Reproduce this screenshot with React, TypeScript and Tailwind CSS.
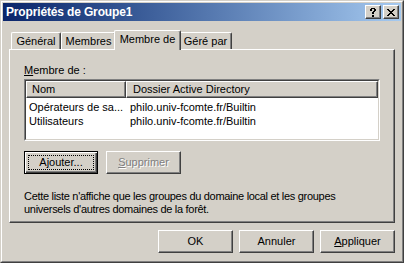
import React from "react";

function CloseGlyph() {
  return (
    <svg width="8" height="7" viewBox="0 0 8 7" shapeRendering="crispEdges">
      <path
        fill="#000"
        d="M0 0h2v1H0zM6 0h2v1H6zM1 1h2v1H1zM5 1h2v1H5zM2 2h4v1H2zM3 3h2v1H3zM2 4h4v1H2zM1 5h2v1H1zM5 5h2v1H5zM0 6h2v1H0zM6 6h2v1H6z"
      />
    </svg>
  );
}

function HelpGlyph() {
  return (
    <svg width="6" height="9" viewBox="0 0 6 9" shapeRendering="crispEdges">
      <path
        fill="#000"
        d="M1 0h4v1H1zM0 1h2v2H0zM4 1h2v2H4zM3 3h2v1H3zM2 4h2v2H2zM2 7h2v2H2z"
      />
    </svg>
  );
}

function TitleButton({ children }: { children: React.ReactNode }) {
  return (
    <div className="w-[16px] h-[14px] bg-[#d4d0c8] border border-t-white border-l-white border-r-[#404040] border-b-[#404040] shadow-[inset_-1px_-1px_#808080] flex items-center justify-center">
      {children}
    </div>
  );
}

function Tab({ label, active, w }: { label: string; active?: boolean; w: string }) {
  if (active) {
    return (
      <div
        className={`${w} h-[20px] mb-[-1px] mx-[-2px] relative z-10 bg-[#d4d0c8] border-t border-l border-r border-t-white border-l-white border-r-[#404040] shadow-[inset_-1px_0_#808080] rounded-t-[2px] flex justify-center pt-[2px] leading-[13px]`}
      >
        {label}
      </div>
    );
  }
  return (
    <div
      className={`${w} h-[17px] bg-[#d4d0c8] border-t border-l border-r border-t-white border-l-white border-r-[#404040] shadow-[inset_-1px_0_#808080] rounded-t-[2px] flex justify-center pt-[2px] leading-[13px]`}
    >
      {label}
    </div>
  );
}

function Button({ children, w }: { children: React.ReactNode; w: string }) {
  return (
    <div
      className={`${w} h-[23px] bg-[#d4d0c8] border border-t-white border-l-white border-r-[#404040] border-b-[#404040] shadow-[inset_-1px_-1px_#808080] flex items-center justify-center leading-[13px]`}
    >
      {children}
    </div>
  );
}

export default function App() {
  return (
    <div className="w-[404px] h-[263px] bg-[#d4d0c8] text-[11px] text-black font-['Liberation_Sans',Arial,sans-serif] border border-t-[#d4d0c8] border-l-[#d4d0c8] border-r-[#404040] border-b-[#404040]">
      <div className="h-full border border-t-white border-l-white border-r-[#808080] border-b-[#808080] p-px flex flex-col">
        {/* Title bar */}
        <div className="h-[18px] bg-linear-to-r from-[#0a246a] to-[#a6caf0] flex items-center pl-[3px] pr-[2px]">
          <div className="flex-1 text-white font-bold text-[12px] leading-[14px] tracking-[-0.15px]">
            Propriétés de Groupe1
          </div>
          <div className="flex gap-[2px]">
            <TitleButton>
              <HelpGlyph />
            </TitleButton>
            <TitleButton>
              <CloseGlyph />
            </TitleButton>
          </div>
        </div>

        <div className="flex-1 flex flex-col px-[6px] pt-[9px] pb-[7px]">
          {/* Tabs */}
          <div className="h-[19px] flex items-end pl-[2px]">
            <Tab label="Général" w="w-[50px]" />
            <Tab label="Membres" w="w-[55px]" />
            <Tab label="Membre de" w="w-[67px]" active />
            <Tab label="Géré par" w="w-[53px]" />
          </div>

          {/* Panel */}
          <div className="h-[174px] border border-t-white border-l-white border-r-[#404040] border-b-[#404040] shadow-[inset_-1px_-1px_#808080] flex flex-col pl-[14px] pt-[14px]">
            <div className="leading-[13px]">
              <span className="underline">M</span>embre de :
            </div>

            {/* List view */}
            <div className="mt-[2px] w-[356px] h-[62px] border border-t-[#808080] border-l-[#808080] border-r-white border-b-white">
              <div className="h-full border border-t-[#404040] border-l-[#404040] border-r-[#d4d0c8] border-b-[#d4d0c8] bg-white flex flex-col">
                <div className="h-[17px] flex">
                  <div className="w-[100px] h-full bg-[#d4d0c8] border border-t-white border-l-white border-r-[#404040] border-b-[#404040] shadow-[inset_-1px_-1px_#808080] flex items-center pl-[5px] leading-[13px]">
                    Nom
                  </div>
                  <div className="flex-1 h-full bg-[#d4d0c8] border border-t-white border-l-white border-r-[#404040] border-b-[#404040] shadow-[inset_-1px_-1px_#808080] flex items-center pl-[6px] leading-[13px]">
                    Dossier Active Directory
                  </div>
                </div>
                <div className="flex flex-col pt-[2px]">
                  <div className="flex h-[14px] items-center leading-[13px]">
                    <div className="w-[100px] pl-[3px]">Opérateurs de sa...</div>
                    <div className="pl-[4px]">philo.univ-fcomte.fr/Builtin</div>
                  </div>
                  <div className="flex h-[14px] items-center leading-[13px]">
                    <div className="w-[100px] pl-[3px]">Utilisateurs</div>
                    <div className="pl-[4px]">philo.univ-fcomte.fr/Builtin</div>
                  </div>
                </div>
              </div>
            </div>

            {/* Ajouter / Supprimer */}
            <div className="mt-[10px] flex gap-[8px]">
              <div className="w-[74px] h-[23px] border border-black">
                <div className="h-full bg-[#d4d0c8] shadow-[inset_1px_1px_#fff,inset_-1px_-1px_#404040,inset_-2px_-2px_#808080] p-[3px] flex">
                  <div className="flex-1 border border-dotted border-black flex items-center justify-center leading-[13px]">
                    A<span className="underline">j</span>outer...
                  </div>
                </div>
              </div>
              <Button w="w-[75px]">
                <span className="text-[#808080] [text-shadow:1px_1px_0_#fff]">
                  <span className="underline">S</span>upprimer
                </span>
              </Button>
            </div>

            <div className="mt-[16px] leading-[13px] tracking-[-0.3px]">
              Cette liste n'affiche que les groupes du domaine local et les groupes
              <br />
              universels d'autres domaines de la forêt.
            </div>
          </div>

          {/* Bottom buttons */}
          <div className="mt-[7px] flex justify-end gap-[6px]">
            <Button w="w-[75px]">OK</Button>
            <Button w="w-[75px]">Annuler</Button>
            <Button w="w-[75px]">
              <span>
                <span className="underline">A</span>ppliquer
              </span>
            </Button>
          </div>
        </div>
      </div>
    </div>
  );
}
